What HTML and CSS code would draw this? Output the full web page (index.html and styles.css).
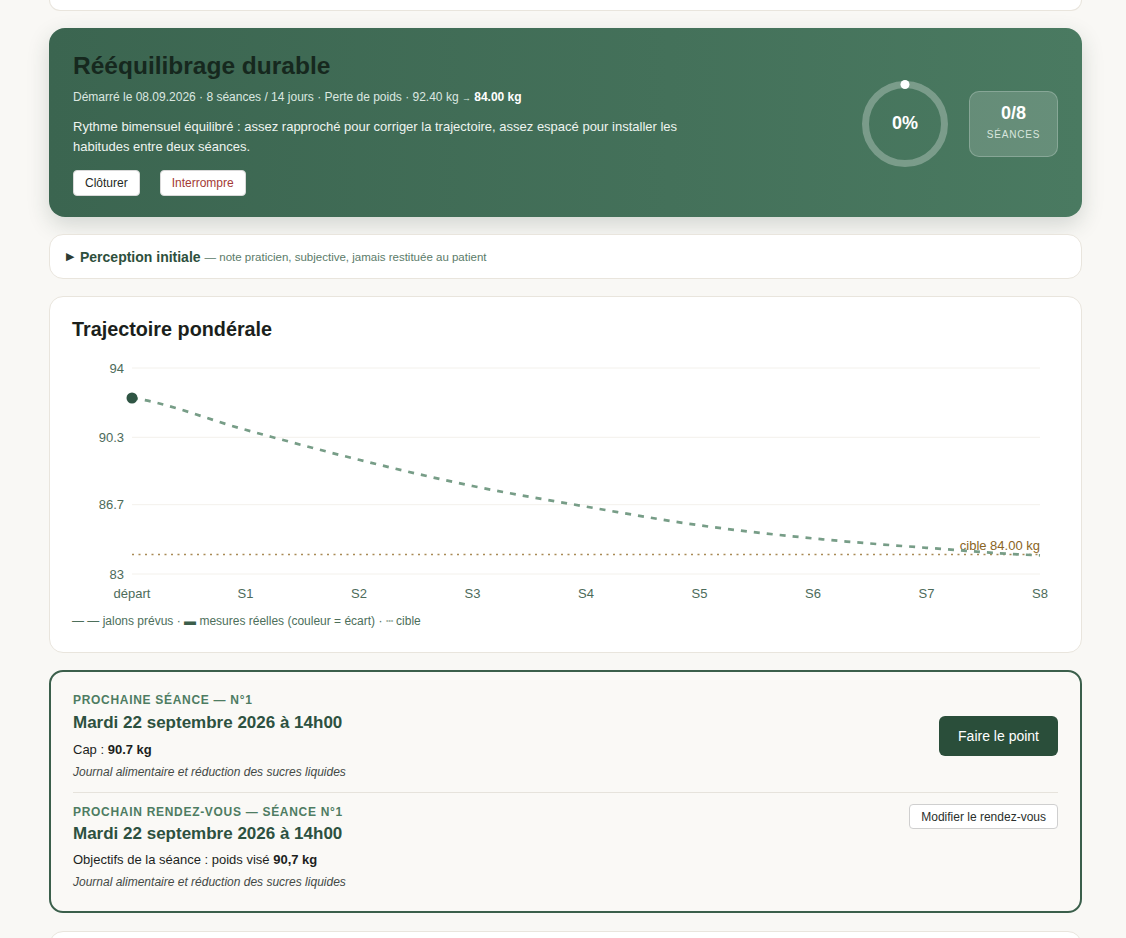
FILE: index.html
```html
<!DOCTYPE html>
<html lang="fr">
<head>
<meta charset="utf-8">
<title>Rééquilibrage durable</title>
<link rel="stylesheet" href="styles.css">
</head>
<body>
<main class="page">
  <div class="card stub"></div>

  <section class="hero">
    <div class="hero-main">
      <h1 class="hero-title">Rééquilibrage durable</h1>
      <p class="hero-meta">Démarré le 08.09.2026 · 8 séances / 14 jours · Perte de poids · 92.40 kg <span class="arrow">→</span> <strong>84.00 kg</strong></p>
      <p class="hero-desc">Rythme bimensuel équilibré : assez rapproché pour corriger la trajectoire, assez espacé pour installer les habitudes entre deux séances.</p>
      <div class="hero-actions">
        <button class="btn-light">Clôturer</button>
        <button class="btn-light danger">Interrompre</button>
      </div>
    </div>
    <div class="hero-side">
      <div class="ring">
        <svg width="90" height="90" viewBox="0 0 90 90">
          <circle cx="45" cy="45" r="39.5" fill="none" stroke="rgba(255,255,255,0.28)" stroke-width="7"/>
          <circle cx="45" cy="5.5" r="4.5" fill="#ffffff"/>
        </svg>
        <span class="ring-label">0%</span>
      </div>
      <div class="count-box">
        <span class="count-num">0/8</span>
        <span class="count-lbl">SÉANCES</span>
      </div>
    </div>
  </section>

  <section class="card perception">
    <span class="tri">▶</span>
    <span class="perc-title">Perception initiale</span>
    <span class="perc-note">— note praticien, subjective, jamais restituée au patient</span>
  </section>

  <section class="card chart-card">
    <h2 class="chart-title">Trajectoire pondérale</h2>
    <svg class="chart" width="986" height="250" viewBox="0 0 986 250">
      <g stroke="#f3f1ec" stroke-width="1">
        <line x1="60" y1="13" x2="968" y2="13"/>
        <line x1="60" y1="82.3" x2="968" y2="82.3"/>
        <line x1="60" y1="149.7" x2="968" y2="149.7"/>
        <line x1="60" y1="219" x2="968" y2="219"/>
      </g>
      <g class="axis" text-anchor="end">
        <text x="52" y="17.5">94</text>
        <text x="52" y="86.8">90.3</text>
        <text x="52" y="154.2">86.7</text>
        <text x="52" y="223.5">83</text>
      </g>
      <g class="axis" text-anchor="middle">
        <text x="60" y="243">départ</text>
        <text x="173.5" y="243">S1</text>
        <text x="287" y="243">S2</text>
        <text x="400.5" y="243">S3</text>
        <text x="514" y="243">S4</text>
        <text x="627.5" y="243">S5</text>
        <text x="741" y="243">S6</text>
        <text x="854.5" y="243">S7</text>
        <text x="968" y="243">S8</text>
      </g>
      <line x1="60" y1="199.5" x2="968" y2="199.5" stroke="#a98a55" stroke-width="1.5" stroke-dasharray="2 4.5"/>
      <text class="target-lbl" x="968" y="195" text-anchor="end">cible 84.00 kg</text>
      <path d="M60,43 C97.8,48.3 135.7,64.5 173.5,74.8 C211.3,85.1 249.2,95.4 287,104.8 C324.8,114.2 362.7,123.2 400.5,131 C438.3,138.8 476.2,145.1 514,151.6 C551.8,158.2 589.7,165 627.5,170.3 C665.3,175.6 703.2,179.7 741,183.4 C778.8,187.2 816.7,190 854.5,192.8 C892.3,195.6 930.2,199.1 968,200.3" fill="none" stroke="#779d87" stroke-width="2.7" stroke-dasharray="6 7"/>
      <circle cx="60" cy="43" r="5.5" fill="#2f5544"/>
    </svg>
    <p class="legend">— — jalons prévus · <span class="leg-bar">▬</span> mesures réelles (couleur = écart) · ┄ cible</p>
  </section>

  <section class="next-card">
    <div class="next-sec first">
      <div class="next-info">
        <div class="next-label">PROCHAINE SÉANCE — N°1</div>
        <div class="next-title">Mardi 22 septembre 2026 à 14h00</div>
        <div class="next-line">Cap : <strong>90.7 kg</strong></div>
        <div class="next-note">Journal alimentaire et réduction des sucres liquides</div>
      </div>
      <button class="btn-primary">Faire le point</button>
    </div>
    <div class="next-sec second">
      <div class="next-info">
        <div class="next-label">PROCHAIN RENDEZ-VOUS — SÉANCE N°1</div>
        <div class="next-title">Mardi 22 septembre 2026 à 14h00</div>
        <div class="next-line">Objectifs de la séance : poids visé <strong>90,7 kg</strong></div>
        <div class="next-note">Journal alimentaire et réduction des sucres liquides</div>
      </div>
      <button class="btn-outline">Modifier le rendez-vous</button>
    </div>
  </section>

  <div class="card tail"></div>
</main>
</body>
</html>
```

FILE: styles.css
```css
* { box-sizing: border-box; }

html, body {
  margin: 0;
  padding: 0;
  background: #f9f8f5;
  font-family: "Liberation Sans", Arial, sans-serif;
  color: #1f2a24;
  overflow: hidden;
}

.page {
  width: 1126px;
  height: 938px;
  padding: 0 44px 0 49px;
  display: flex;
  flex-direction: column;
  gap: 17px;
}

.card {
  background: #ffffff;
  border: 1px solid #e9e5dd;
  border-radius: 14px;
  flex-shrink: 0;
}

.stub {
  height: 11px;
  border-top: none;
  border-radius: 0 0 14px 14px;
}

/* HERO */
.hero {
  flex-shrink: 0;
  display: flex;
  align-items: center;
  padding: 23px 24px 21px 24px;
  border-radius: 16px;
  background: linear-gradient(90deg, #3b6550 0%, #44715a 60%, #4a7a61 100%);
  box-shadow: 0 8px 22px rgba(40, 60, 50, 0.18);
  color: #e6efe9;
}

.hero-main { flex: 1; }

.hero-title {
  margin: 0;
  font-size: 24.5px;
  line-height: 29px;
  font-weight: 700;
  color: #16281e;
}

.hero-meta {
  margin: 9px 0 0;
  font-size: 12px;
  line-height: 16px;
  color: #dce8e0;
}

.hero-meta strong { color: #ffffff; }

.arrow { font-size: 9px; }

.hero-desc {
  margin: 11px 0 0;
  max-width: 640px;
  font-size: 13px;
  line-height: 19.5px;
  color: #eef4f0;
}

.hero-actions {
  margin-top: 14px;
  display: flex;
  gap: 20px;
}

.btn-light {
  height: 26px;
  padding: 0 11px;
  font-family: inherit;
  font-size: 12px;
  background: #ffffff;
  color: #1f2a24;
  border: 1px solid #d9d9d9;
  border-radius: 4px;
}

.btn-light.danger { color: #a33a35; }

.hero-side {
  display: flex;
  align-items: center;
  gap: 19px;
}

.ring {
  position: relative;
  width: 90px;
  height: 90px;
}

.ring svg { display: block; }

.ring-label {
  position: absolute;
  inset: 0;
  display: flex;
  align-items: center;
  justify-content: center;
  font-size: 18px;
  font-weight: 700;
  color: #ffffff;
}

.count-box {
  width: 89px;
  height: 66px;
  display: flex;
  flex-direction: column;
  align-items: center;
  justify-content: flex-start;
  padding-top: 11px;
  gap: 6px;
  background: rgba(255, 255, 255, 0.16);
  border: 1px solid rgba(255, 255, 255, 0.22);
  border-radius: 10px;
}

.count-num {
  font-size: 18px;
  font-weight: 700;
  line-height: 20px;
  color: #ffffff;
}

.count-lbl {
  font-size: 10px;
  letter-spacing: 0.8px;
  line-height: 12px;
  color: #d9e6de;
}

/* PERCEPTION */
.perception {
  height: 45px;
  display: flex;
  align-items: center;
  padding: 0 16px;
}

.tri {
  font-size: 11px;
  color: #2c3a32;
  margin-right: 6px;
}

.perc-title {
  font-size: 14px;
  font-weight: 700;
  color: #2d4f3c;
  margin-right: 4px;
}

.perc-note {
  font-size: 11.5px;
  color: #5b7b69;
}

/* CHART */
.chart-card {
  padding: 20px 22px 23px 22px;
}

.chart-title {
  margin: 0;
  font-size: 19.8px;
  line-height: 24px;
  font-weight: 700;
  color: #1b1f1c;
}

.chart {
  display: block;
  margin-top: 14px;
}

.axis text {
  font-family: "Liberation Sans", Arial, sans-serif;
  font-size: 13px;
  fill: #4d6b5a;
}

.target-lbl {
  font-family: "Liberation Sans", Arial, sans-serif;
  font-size: 13px;
  fill: #8a6425;
}

.legend {
  margin: 8px 0 0;
  font-size: 12px;
  line-height: 16px;
  color: #4d6f5b;
}

.leg-bar { color: #3b5e4a; }

/* NEXT SESSION */
.next-card {
  flex-shrink: 0;
  border: 2px solid #3b5f4b;
  border-radius: 14px;
  background: #faf9f6;
  padding: 20px 22px 21px 22px;
}

.next-sec {
  display: flex;
  justify-content: space-between;
}

.next-sec.first {
  align-items: center;
  padding-bottom: 12px;
  border-bottom: 1px solid #e6e3dc;
}

.next-sec.second {
  align-items: flex-start;
  padding-top: 11px;
}

.next-label {
  font-size: 12px;
  line-height: 16px;
  font-weight: 700;
  letter-spacing: 0.7px;
  color: #4e7c62;
}

.next-title {
  margin-top: 4px;
  font-size: 17px;
  line-height: 22px;
  font-weight: 700;
  color: #2d5140;
}

.next-line {
  margin-top: 8px;
  font-size: 13px;
  line-height: 16px;
  color: #1c1f1d;
}

.second .next-title { margin-top: 3px; }
.second .next-line { margin-top: 7px; }

.next-note {
  margin-top: 6px;
  font-size: 12px;
  line-height: 16px;
  font-style: italic;
  color: #444a46;
}

.btn-primary {
  height: 40px;
  padding: 0 19px;
  font-family: inherit;
  font-size: 14px;
  color: #ffffff;
  background: #2a4e3a;
  border: none;
  border-radius: 6px;
}

.btn-outline {
  height: 25px;
  padding: 0 11px;
  font-family: inherit;
  font-size: 12px;
  color: #2a2f2c;
  background: #ffffff;
  border: 1px solid #cfcfcf;
  border-radius: 4px;
}

.tail {
  height: 40px;
  margin-top: 1px;
}
```
